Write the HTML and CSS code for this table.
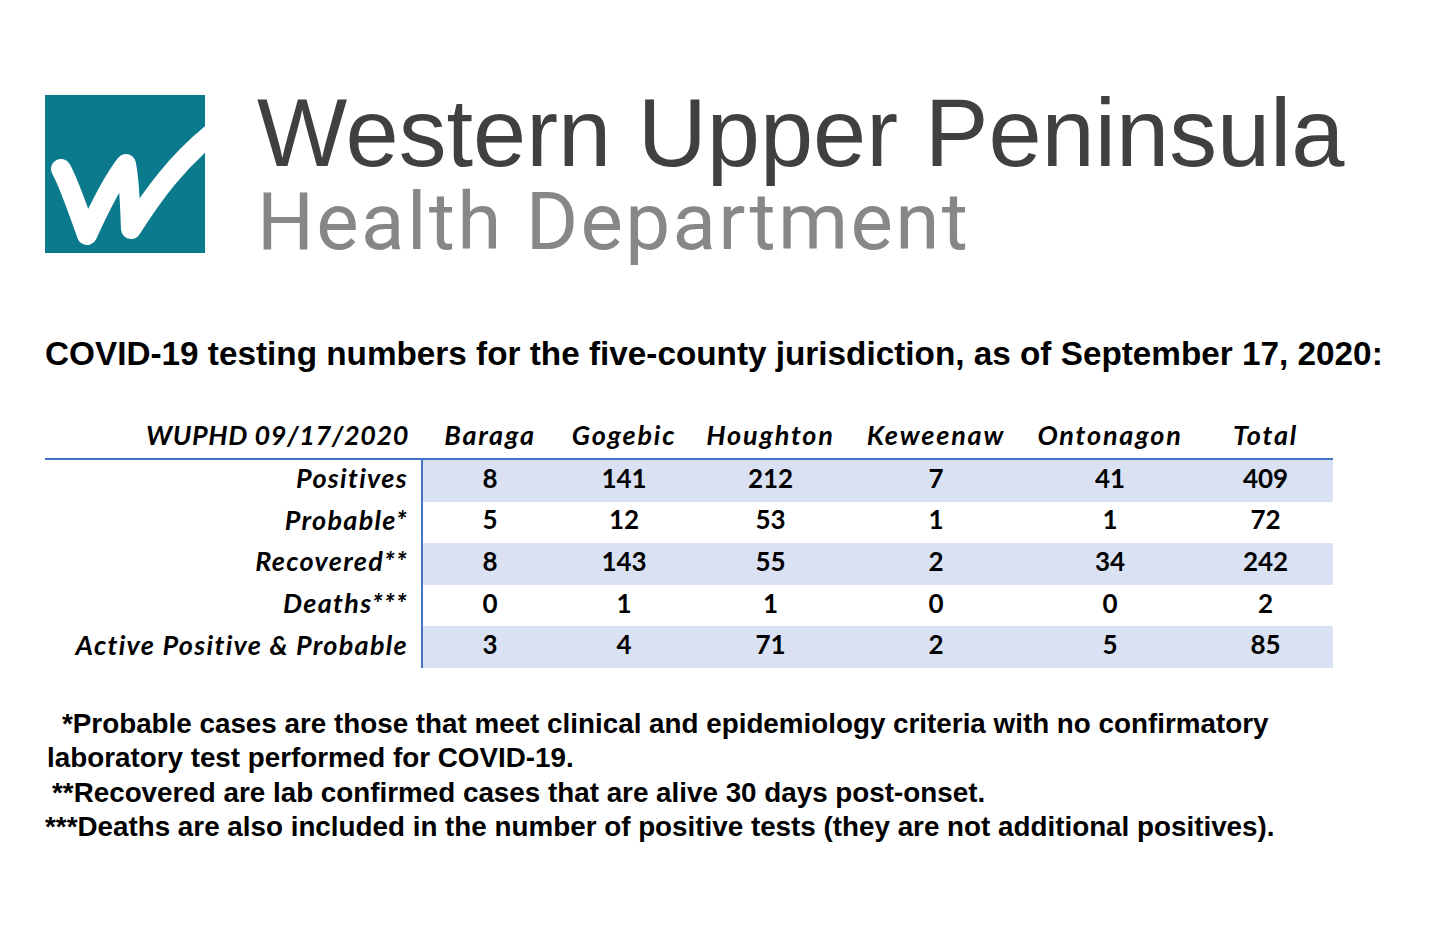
FILE: index.html
```html
<!DOCTYPE html>
<html>
<head>
<meta charset="utf-8">
<link rel="stylesheet" href="styles.css">
</head>
<body>
<div class="page">
  <header class="brand">
    <svg class="logo" viewBox="0 0 160 158" width="160" height="158">
      <rect width="160" height="158" fill="#0b7a8c"/>
      <path d="M16,74 C24,88 34,118 42,140 C52,118 66,88 81,69 C85,90 85,114 86,134 C108,100 132,66 170,36" fill="none" stroke="#fff" stroke-width="20" stroke-linecap="round" stroke-linejoin="round"/>
    </svg>
    <div class="brand-text">
      <div class="brand-name">Western Upper Peninsula</div>
      <div class="brand-sub">Health Department</div>
    </div>
  </header>

  <h1 class="title">COVID-19 testing numbers for the five-county jurisdiction, as of September 17, 2020:</h1>

  <div class="table">
    <div class="row head">
      <div class="cell label">WUPHD 09/17/2020</div>
      <div class="cell">Baraga</div>
      <div class="cell">Gogebic</div>
      <div class="cell">Houghton</div>
      <div class="cell">Keweenaw</div>
      <div class="cell">Ontonagon</div>
      <div class="cell">Total</div>
    </div>
    <div class="row shade">
      <div class="cell label">Positives</div>
      <div class="cell num">8</div><div class="cell num">141</div><div class="cell num">212</div><div class="cell num">7</div><div class="cell num">41</div><div class="cell num">409</div>
    </div>
    <div class="row">
      <div class="cell label">Probable*</div>
      <div class="cell num">5</div><div class="cell num">12</div><div class="cell num">53</div><div class="cell num">1</div><div class="cell num">1</div><div class="cell num">72</div>
    </div>
    <div class="row shade">
      <div class="cell label">Recovered**</div>
      <div class="cell num">8</div><div class="cell num">143</div><div class="cell num">55</div><div class="cell num">2</div><div class="cell num">34</div><div class="cell num">242</div>
    </div>
    <div class="row">
      <div class="cell label">Deaths***</div>
      <div class="cell num">0</div><div class="cell num">1</div><div class="cell num">1</div><div class="cell num">0</div><div class="cell num">0</div><div class="cell num">2</div>
    </div>
    <div class="row shade">
      <div class="cell label">Active Positive &amp; Probable</div>
      <div class="cell num">3</div><div class="cell num">4</div><div class="cell num">71</div><div class="cell num">2</div><div class="cell num">5</div><div class="cell num">85</div>
    </div>
  </div>

  <div class="notes">
    <p class="note n1">*Probable cases are those that meet clinical and epidemiology criteria with no confirmatory</p>
    <p class="note n2">laboratory test performed for COVID-19.</p>
    <p class="note n3">**Recovered are lab confirmed cases that are alive 30 days post-onset.</p>
    <p class="note n4">***Deaths are also included in the number of positive tests (they are not additional positives).</p>
  </div>
</div>
</body>
</html>
```

FILE: styles.css
```css
html, body {
  margin: 0;
  padding: 0;
  background: #ffffff;
}

.page {
  width: 1436px;
  height: 928px;
  padding-left: 45px;
  box-sizing: border-box;
  overflow: hidden;
}

.brand {
  display: flex;
  align-items: flex-start;
  gap: 52px;
  padding-top: 84.5px;
}

.logo {
  display: block;
  margin-top: 10.5px;
  flex: none;
}

.brand-text {
  font-family: "Liberation Sans", Arial, sans-serif;
}

.brand-name {
  font-size: 95.6px;
  line-height: 96px;
  color: #404040;
  white-space: nowrap;
}

.brand-sub {
  font-family: Roboto, "Liberation Sans", sans-serif;
  font-size: 80px;
  line-height: 80px;
  margin-top: 1.5px;
  color: #878787;
  letter-spacing: 2.3px;
  white-space: nowrap;
}

.title {
  margin: 73px 0 0 0;
  font-family: "Liberation Sans", Arial, sans-serif;
  font-weight: bold;
  font-size: 33.3px;
  line-height: 38px;
  color: #000;
  white-space: nowrap;
}

.table {
  margin-top: 45px;
  width: 1288px;
  font-family: Lato, "Liberation Sans", sans-serif;
  font-weight: bold;
  font-size: 26px;
  color: #000;
}

.row {
  display: grid;
  grid-template-columns: 378px 134px 134px 159px 172px 176px 135px;
  height: 41.6px;
  align-items: center;
}

.row.head {
  height: 40px;
  font-style: italic;
  font-size: 27px;
  letter-spacing: 1.8px;
  border-bottom: 2px solid #4472c4;
}

.row.head .cell {
  padding-bottom: 9px;
}

.row.shade .cell:not(.label) {
  background: #d9e1f2;
}

.cell {
  box-sizing: border-box;
  height: 100%;
  display: flex;
  align-items: center;
  justify-content: center;
  padding-bottom: 6px;
  white-space: nowrap;
}

.cell.label {
  justify-content: flex-end;
  padding-right: 13px;
  font-style: italic;
  font-size: 27px;
  letter-spacing: 1.3px;
}

.row.head .cell.label {
  letter-spacing: 0.6px;
  padding-right: 14px;
}

.row:not(.head) .cell.label {
  border-right: 2px solid #4472c4;
}

.notes {
  margin-top: 39px;
  font-family: "Liberation Sans", Arial, sans-serif;
  font-weight: bold;
  font-size: 27.8px;
  line-height: 34.4px;
  color: #000;
}

.note {
  margin: 0;
  white-space: nowrap;
}

.n1 { padding-left: 17px; }
.n2 { padding-left: 2px; }
.n3 { padding-left: 7px; }
.n4 { padding-left: 0; }
```
